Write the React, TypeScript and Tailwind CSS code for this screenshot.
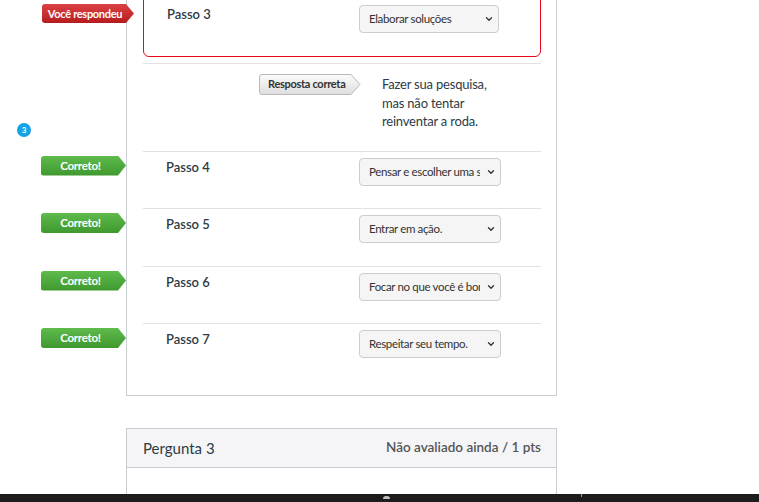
import { ChevronDown } from 'lucide-react'

const steps = [
  { label: 'Passo 4', value: 'Pensar e escolher uma solução.' },
  { label: 'Passo 5', value: 'Entrar em ação.' },
  { label: 'Passo 6', value: 'Focar no que você é bom.' },
  { label: 'Passo 7', value: 'Respeitar seu tempo.' },
]

function Dropdown({ value, width }: { value: string; width: string }) {
  return (
    <div className={`relative ${width} h-[28px]`}>
      <select
        defaultValue={value}
        className="w-full h-full appearance-none bg-[#f5f5f5] border border-[#c7cdd1] rounded-[4px] pl-[9px] pr-[20px] text-[11.5px] tracking-[-0.35px] text-[#333] overflow-hidden whitespace-nowrap"
      >
        <option>{value}</option>
      </select>
      <ChevronDown size={10} strokeWidth={3.2} className="absolute right-[5px] top-[9px] text-[#333] pointer-events-none" />
    </div>
  )
}

function Flag({ text, tone }: { text: string; tone: 'red' | 'green' }) {
  const color =
    tone === 'red'
      ? 'w-[92px] h-[19px] text-[11px] bg-linear-to-b from-[#da4142] to-[#b51b1e]'
      : 'w-[85px] h-[20px] text-[11.5px] bg-linear-to-b from-[#5fbb4c] to-[#3e982f]'
  return (
    <div
      className={`${color} rounded-l-[3px] flex items-center pr-[6px] justify-center whitespace-nowrap text-white tracking-[-0.3px] font-bold leading-none [clip-path:polygon(0_0,calc(100%_-_8px)_0,100%_50%,calc(100%_-_8px)_100%,0_100%)]`}
    >
      {text}
    </div>
  )
}

function CorrectTag() {
  return (
    <div className="relative w-[102px] h-[21px] flex items-center pl-[9px]">
      <svg width="102" height="21" className="absolute inset-0">
        <defs>
          <linearGradient id="tag" x1="0" y1="0" x2="0" y2="1">
            <stop offset="0" stopColor="#fbfbfb" />
            <stop offset="1" stopColor="#dedede" />
          </linearGradient>
        </defs>
        <path
          d="M3 0.5 H92 L101 10.5 L92 20.5 H3 Q0.5 20.5 0.5 18 V3 Q0.5 0.5 3 0.5 Z"
          fill="url(#tag)"
          stroke="#b9b9b9"
        />
      </svg>
      <span className="relative text-[11px] tracking-[-0.3px] font-bold text-[#333]">Resposta correta</span>
    </div>
  )
}

export default function App() {
  return (
    <div className="relative w-[759px] h-[502px] overflow-hidden bg-white font-['Lato',sans-serif] text-[#2d3b45]">
      {/* question number bubble */}
      <div className="absolute left-[17px] top-[123px] w-[14px] h-[14px] rounded-full bg-[#13a3e8] text-white text-[8px] font-bold flex items-center justify-center">
        3
      </div>

      <div className="ml-[126px] w-[431px]">
        {/* question panel */}
        <div className="-mt-[20px] border-x border-b border-[#c7cdd1] pl-[16px] pr-[15px] pb-[14px]">
          <div className="relative border border-[#e8081a] rounded-b-[6px] pt-[24px] pb-[23px] pl-[23px] flex items-start">
            <div className="absolute -left-[102px] top-[23px]">
              <Flag text="Você respondeu" tone="red" />
            </div>
            <div className="w-[192px] text-[13px] font-semibold leading-[18px]">Passo 3</div>
            <Dropdown value="Elaborar soluções" width="w-[140px]" />
          </div>

          <div className="mt-[6px] border-t border-[#e2e2e2] pt-[10px] pb-[20px] pl-[116px] flex items-start">
            <CorrectTag />
            <div className="ml-[21px] mt-[1px] text-[13px] tracking-[-0.2px] leading-[18.5px] text-[#2d3b45]">
              Fazer sua pesquisa,
              <br />
              mas não tentar
              <br />
              reinventar a roda.
            </div>
          </div>

          {steps.map((s) => (
            <div key={s.label} className="relative border-t border-[#e2e2e2] pt-[6px] pb-[22.5px] pl-[23px] flex items-start">
              <div className="absolute -left-[102px] top-[4px]">
                <Flag text="Correto!" tone="green" />
              </div>
              <div className="w-[193px] text-[13px] font-semibold leading-[18px]">{s.label}</div>
              <Dropdown value={s.value} width="w-[142px]" />
            </div>
          ))}
        </div>

        {/* next question */}
        <div className="mt-[32px] border border-[#c7cdd1] h-[100px]">
          <div className="h-[39px] bg-[#f5f5f7] border-b border-[#c7cdd1] pl-[16px] pr-[15px] flex items-center justify-between">
            <span className="text-[15px] mt-[2px]">Pergunta 3</span>
            <span className="text-[13.5px] font-semibold text-[#545454]">Não avaliado ainda / 1 pts</span>
          </div>
        </div>
      </div>

      {/* bottom bar */}
      <div className="absolute left-0 right-0 bottom-0 h-[8px] bg-[#1c1c1c]">
        <div className="absolute left-[383px] top-[2px] w-[7px] h-[3px] rounded-t-full bg-[#bdbdbd]" />
        <div className="absolute left-[581px] top-0 w-px h-[3px] bg-[#9a9a9a]" />
      </div>
    </div>
  )
}
